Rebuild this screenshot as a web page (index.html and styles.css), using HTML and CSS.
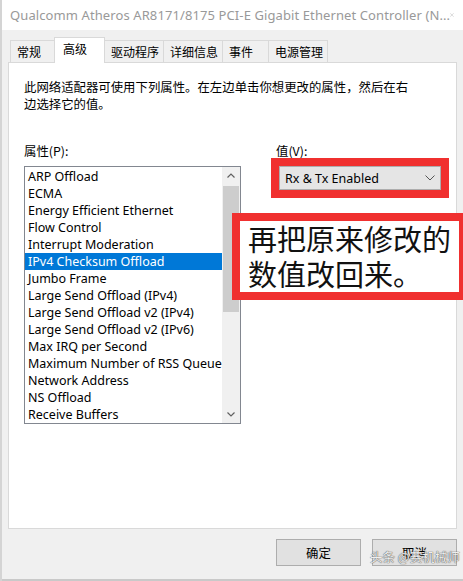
FILE: index.html
```html
<!DOCTYPE html>
<html>
<head>
	<title>属性</title>
	<meta charset="utf-8">
	<link rel="stylesheet" href="styles.css">
</head>
<body>

	<div class="window">

		<div class="titlebar">
			<span class="title">Qualcomm Atheros AR8171/8175 PCI-E Gigabit Ethernet Controller (N...</span>
			<svg class="close" width="12" height="12" viewBox="0 0 12 12">
				<path d="M0.5 0.5 L11.5 11.5 M11.5 0.5 L0.5 11.5" stroke="#8c8c8c" stroke-width="1" fill="none"/>
			</svg>
		</div>

		<div class="dialog">

			<div class="tabs">
				<div class="tab">常规</div>
				<div class="tab active">高级</div>
				<div class="tab">驱动程序</div>
				<div class="tab">详细信息</div>
				<div class="tab">事件</div>
				<div class="tab">电源管理</div>
			</div>

			<div class="panel">
				<p class="intro">此网络适配器可使用下列属性。在左边单击你想更改的属性，然后在右<br>边选择它的值。</p>

				<div class="fields">
					<div class="field field-prop">
						<div class="label">属性(P):</div>
						<div class="listbox">
							<ul class="items">
								<li>ARP Offload</li>
								<li>ECMA</li>
								<li>Energy Efficient Ethernet</li>
								<li>Flow Control</li>
								<li>Interrupt Moderation</li>
								<li class="selected">IPv4 Checksum Offload</li>
								<li>Jumbo Frame</li>
								<li>Large Send Offload (IPv4)</li>
								<li>Large Send Offload v2 (IPv4)</li>
								<li>Large Send Offload v2 (IPv6)</li>
								<li>Max IRQ per Second</li>
								<li>Maximum Number of RSS Queue</li>
								<li>Network Address</li>
								<li>NS Offload</li>
								<li>Receive Buffers</li>
							</ul>
							<div class="scrollbar">
								<svg class="arrow" width="8" height="5" viewBox="0 0 8 5">
									<path d="M0.5 4.5 L4 1 L7.5 4.5" stroke="#606060" stroke-width="1.2" fill="none"/>
								</svg>
								<div class="track">
									<div class="thumb"></div>
								</div>
								<svg class="arrow" width="8" height="5" viewBox="0 0 8 5">
									<path d="M0.5 0.5 L4 4 L7.5 0.5" stroke="#606060" stroke-width="1.2" fill="none"/>
								</svg>
							</div>
						</div>
					</div>

					<div class="field field-value">
						<div class="label">值(V):</div>
						<div class="combo">
							<span>Rx &amp; Tx Enabled</span>
							<svg width="10" height="6" viewBox="0 0 10 6">
								<path d="M0.5 0.5 L5 5 L9.5 0.5" stroke="#555" stroke-width="1" fill="none"/>
							</svg>
						</div>
					</div>
				</div>
			</div>

			<div class="buttons">
				<button class="btn btn-ok">确定</button>
				<button class="btn btn-cancel">取消</button>
			</div>

		</div>

		<div class="note">再把原来修改的数值改回来。</div>
		<div class="watermark">头条 @赛机械师</div>

	</div>

</body>
</html>
```

FILE: styles.css
```css
*,
*:before,
*:after {
	box-sizing: border-box;
}

body {
	margin: 0;
	background-color: #f0f0f0;
	font-family: "Noto Sans", "Noto Sans CJK SC", sans-serif;
	color: #000000;
}

.window {
	position: relative;
	width: 463px;
	height: 581px;
	border-left: 2px solid #d4d4d4;
	background-color: #f0f0f0;
	overflow: hidden;
}

/* title bar */

.titlebar {
	display: flex;
	align-items: center;
	justify-content: space-between;
	height: 30px;
	padding: 0 9px 0 8px;
	background-color: #ffffff;
}

.title {
	font-size: 13px;
	color: #999999;
	white-space: nowrap;
	letter-spacing: 0.1px;
}

/* dialog */

.dialog {
	height: 551px;
	padding: 8px 6px 0 6px;
	border-bottom: 2px solid #c9c9c9;
}

.tabs {
	display: flex;
	align-items: flex-end;
	height: 24px;
	padding-left: 2px;
	font-family: "Noto Sans CJK SC", sans-serif;
	font-size: 12px;
}

.tab {
	position: relative;
	min-width: 47px;
	height: 22px;
	padding: 0 4px 0 6px;
	line-height: 21px;
	background-color: #f0f0f0;
	border: 1px solid #d9d9d9;
	border-bottom: none;
	margin-right: -1px;
}

.tab.active {
	height: 26px;
	margin: 0 -1px -1px -2px;
	padding: 0 8px;
	min-width: 51px;
	line-height: 22px;
	background-color: #ffffff;
	border-color: #d9d9d9;
	z-index: 2;
}

.panel {
	position: relative;
	height: 467px;
	padding: 16px 15px 0 15px;
	background-color: #ffffff;
	border: 1px solid #d9d9d9;
}

.intro {
	margin: 0;
	font-family: "Noto Sans CJK SC", sans-serif;
	font-size: 12.4px;
	line-height: 17px;
	white-space: nowrap;
}

.fields {
	display: flex;
	margin-top: 30px;
}

.label {
	height: 17px;
	font-family: "Noto Sans CJK SC", sans-serif;
	font-size: 12.4px;
	line-height: 17px;
}

.field-prop {
	width: 217px;
}

.field-value {
	margin-left: 35px;
}

/* property list */

.listbox {
	display: flex;
	height: 258px;
	margin-top: 6px;
	padding-top: 1px;
	border: 1px solid #828790;
}

.items {
	flex: 1;
	margin: 0;
	padding: 0;
	list-style: none;
	font-size: 12.5px;
	overflow: hidden;
}

.items li {
	height: 17px;
	padding-left: 3px;
	line-height: 17px;
	white-space: nowrap;
}

.items li.selected {
	background-color: #0078d7;
	color: #ffffff;
}

.scrollbar {
	display: flex;
	flex-direction: column;
	align-items: center;
	width: 18px;
	margin-top: -1px;
	background-color: #f0f0f0;
}

.scrollbar .arrow {
	margin: 6px 0;
}

.track {
	flex: 1;
	width: 100%;
	padding-top: 2px;
}

.thumb {
	height: 126px;
	margin: 0 1px;
	background-color: #cdcdcd;
}

/* value combo */

.combo {
	display: flex;
	align-items: center;
	justify-content: space-between;
	width: 162px;
	height: 24px;
	margin: 6px 0 0 3px;
	padding: 0 5px 0 5px;
	background-color: #e5e5e5;
	border: 1px solid #adadad;
	font-size: 12.5px;
	outline: 8px solid #f0302f;
}

/* buttons */

.buttons {
	display: flex;
	justify-content: flex-end;
	gap: 11px;
	padding: 10px 0 0 0;
}

.btn {
	width: 85px;
	height: 27px;
	padding: 0;
	background-color: #e1e1e1;
	border: 1px solid #adadad;
	font-family: "Noto Sans CJK SC", sans-serif;
	font-size: 12.4px;
	color: #000000;
}

/* overlays */

.note {
	position: absolute;
	left: 230px;
	top: 213px;
	width: 233px;
	height: 87px;
	padding-left: 8px;
	background-color: #ffffff;
	border: 8px solid #f0302f;
	border-right-width: 6px;
	font-family: "Noto Sans CJK SC", sans-serif;
	font-size: 29px;
	line-height: 35px;
	color: #111111;
}

.watermark {
	position: absolute;
	left: 368px;
	top: 547px;
	font-family: "Noto Sans CJK SC", sans-serif;
	font-size: 12.5px;
	color: #eeeeee;
	text-shadow: 0 0 1px #555555, 0 0 1px #555555;
}
```
